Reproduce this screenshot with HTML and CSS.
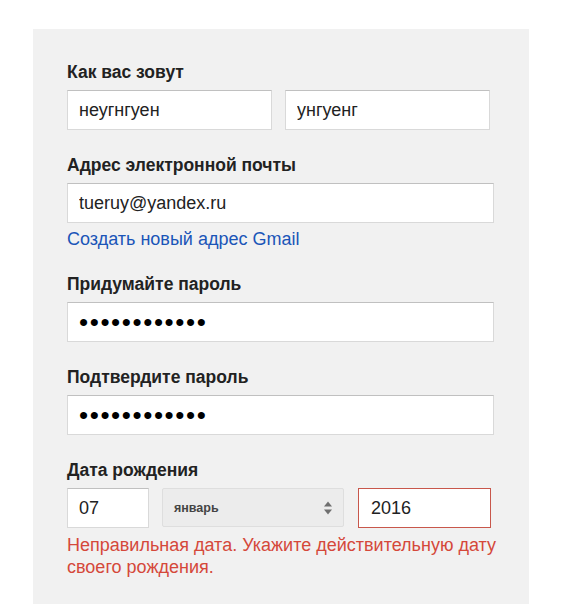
FILE: index.html
```html
<html>
  <head>
    <title>Создать аккаунт</title>
    <link rel="stylesheet" href="styles.css">
  </head>
  <body>
    <div class="signup">
      <form class="signup-form">
        <div class="field">
          <label class="field-label">Как вас зовут</label>
          <div class="row">
            <input class="text half" type="text" value="неугнгуен">
            <input class="text half" type="text" value="унгуенг">
          </div>
        </div>
        <div class="field">
          <label class="field-label">Адрес электронной почты</label>
          <input class="text wide" type="text" value="tueruy@yandex.ru">
          <a class="hint-link" href="#">Создать новый адрес Gmail</a>
        </div>
        <div class="field">
          <label class="field-label">Придумайте пароль</label>
          <input class="text wide pass" type="password" value="123456789012">
        </div>
        <div class="field">
          <label class="field-label">Подтвердите пароль</label>
          <input class="text wide pass" type="password" value="123456789012">
        </div>
        <div class="field">
          <label class="field-label">Дата рождения</label>
          <div class="row birth">
            <input class="text day" type="text" value="07">
            <div class="month">
              <span>январь</span>
              <svg class="arrows" width="10" height="16" viewBox="0 0 10 16">
                <path d="M1 6.5 L5 1.5 L9 6.5 Z" fill="#6f6f6f"/>
                <path d="M1 9.5 L5 14.5 L9 9.5 Z" fill="#6f6f6f"/>
              </svg>
            </div>
            <input class="text year has-error" type="text" value="2016">
          </div>
          <div class="error-msg">Неправильная дата. Укажите действительную дату своего рождения.</div>
        </div>
      </form>
    </div>
  </body>
</html>
```

FILE: styles.css
```css
body {
  margin: 0;
  background-color: #fff;
  font-family: "Liberation Sans", Arial, sans-serif;
  color: #222;
}

.signup {
  margin: 29px 0 0 33px;
  width: 496px;
  min-height: 575px;
  background-color: #f1f1f1;
  box-sizing: border-box;
  padding: 32px 0 0 34px;
}

.signup-form {
  display: flex;
  flex-direction: column;
  gap: 24px;
  margin: 0;
}

.field {
  display: flex;
  flex-direction: column;
}
.field-label {
  font-size: 17.5px;
  font-weight: bold;
  line-height: 22px;
  margin-bottom: 7px;
}

.row {
  display: flex;
  gap: 13px;
}

input.text {
  box-sizing: border-box;
  height: 40px;
  margin: 0;
  padding: 0 11px;
  border: 1px solid #d9d9d9;
  border-top-color: #c0c0c0;
  background-color: #fff;
  font-family: inherit;
  font-size: 18px;
  color: #222;
  outline: none;
}
input.half {
  width: 205px;
}
input.wide {
  width: 427px;
}
input.pass {
  font-size: 26px;
  letter-spacing: 1.6px;
  color: #000;
}
input.day {
  width: 82px;
}
input.year {
  width: 133px;
  padding-left: 12px;
}
.birth input.has-error {
  border: 1px solid #c8574b;
}

.row.birth {
  gap: 13px;
}
.month {
  box-sizing: border-box;
  width: 182px;
  height: 39px;
  margin-right: 1px;
  padding: 0 10px 0 11px;
  border: 1px solid #dedede;
  border-radius: 2px;
  background-color: #ececec;
  display: flex;
  align-items: center;
  justify-content: space-between;
  font-size: 12.5px;
  font-weight: bold;
  color: #444;
}

.hint-link {
  margin-top: 5px;
  margin-bottom: -1px;
  font-size: 18px;
  line-height: 22px;
  color: #1a55b8;
  text-decoration: none;
}

.error-msg {
  margin-top: 6px;
  font-size: 18px;
  line-height: 22px;
  color: #d5483a;
}
```
